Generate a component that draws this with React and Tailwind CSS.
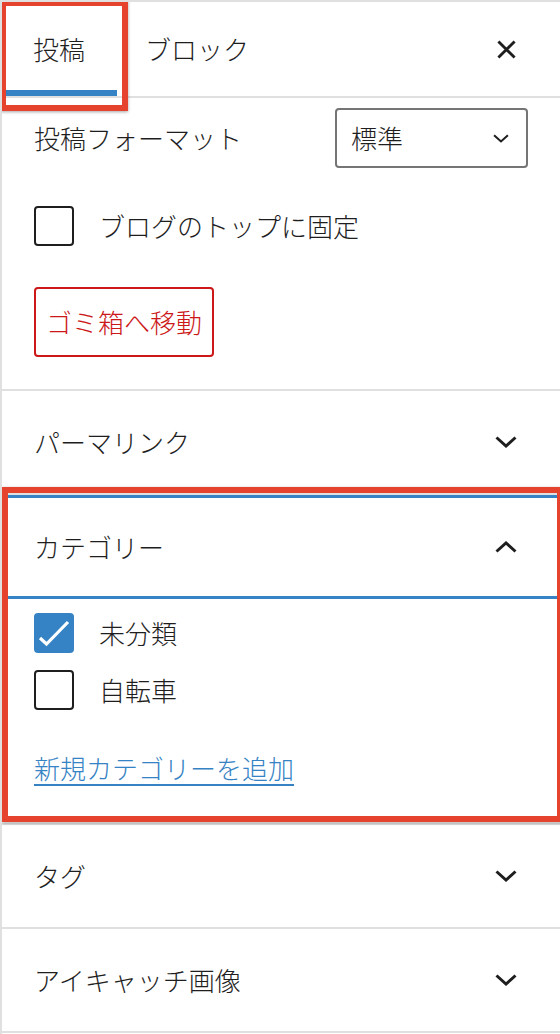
import { useState } from "react";

// サイドバー（投稿設定）のスクショ再現

const Chevron = ({ up = false, small = false }) => (
  <svg
    viewBox="0 0 22 12"
    className={small ? "w-[16px] h-[9px]" : "w-[22px] h-[12px]"}
    fill="none"
    stroke="#1e1e1e"
    strokeWidth={small ? 2.8 : 3}
  >
    {up ? <path d="M1.5 10.5 L11 2 L20.5 10.5" /> : <path d="M1.5 1.5 L11 10 L20.5 1.5" />}
  </svg>
);

const Checkbox = ({ checked }) =>
  checked ? (
    <div className="w-[40px] h-[40px] rounded-[4px] bg-[#3582c4] flex items-center justify-center">
      <svg viewBox="0 0 40 40" className="w-[40px] h-[40px]" fill="none" stroke="#fff" strokeWidth="3.2">
        <path d="M6 25 L12.5 31 L34 9" />
      </svg>
    </div>
  ) : (
    <div className="w-[40px] h-[40px] rounded-[4px] border-2 border-[#1e1e1e]" />
  );

const PanelRow = ({ title }) => (
  <div className="h-[104px] border-b-2 border-[#e0e0e0] flex items-center justify-between pl-[32px] pr-[43px]">
    <span className="text-[26px] leading-[36px]">{title}</span>
    <Chevron />
  </div>
);

const App = () => {
  const [cats] = useState([
    { name: "未分類", checked: true },
    { name: "自転車", checked: false },
  ]);

  return (
    <div className="relative w-[560px] h-[1034px] overflow-hidden bg-white border-l-2 border-t-2 border-[#e0e0e0] text-[#1e1e1e] font-light font-['Noto_Sans_CJK_JP',sans-serif]">
      {/* ヘッダー タブ */}
      <div className="flex h-[96px] border-b-2 border-[#e0e0e0]">
        <div className="flex items-center pl-[31px] pr-[32px] shadow-[inset_0_-6px_0_#3582c4]">
          <span className="text-[26px] leading-[36px]">投稿</span>
        </div>
        <div className="flex items-center px-[28px]">
          <span className="text-[26px] leading-[36px]">ブロック</span>
        </div>
        <div className="ml-auto mr-[12px] w-[84px] flex items-center justify-center">
          <svg viewBox="0 0 20 20" className="w-[19px] h-[19px]" stroke="#1e1e1e" strokeWidth="3">
            <path d="M1.5 1.5 L18.5 18.5 M18.5 1.5 L1.5 18.5" />
          </svg>
        </div>
      </div>

      {/* 投稿設定 */}
      <div className="px-[32px] pt-[10px] pb-[32px] border-b-2 border-[#e0e0e0]">
        <div className="flex items-center justify-between h-[60px]">
          <span className="text-[26px] leading-[36px]">投稿フォーマット</span>
          <div className="w-[193px] h-[60px] border-2 border-[#757575] rounded-[4px] pl-[14px] pr-[17px] flex items-center justify-between">
            <span className="text-[26px] leading-[36px]">標準</span>
            <Chevron small />
          </div>
        </div>
        <div className="mt-[38px] flex items-center gap-[25px]">
          <Checkbox checked={false} />
          <span className="text-[26px] leading-[36px]">ブログのトップに固定</span>
        </div>
        <div className="mt-[41px] flex">
          <div className="h-[70px] px-[10px] border-2 border-[#cc1818] rounded-[4px] text-[#cc1818] flex items-center">
            <span className="text-[26px] leading-[36px]">ゴミ箱へ移動</span>
          </div>
        </div>
      </div>

      <PanelRow title="パーマリンク" />

      {/* カテゴリー */}
      <div className="relative">
        <div className="h-[104px] flex items-center justify-between pl-[32px] pr-[43px] shadow-[inset_0_0_0_3px_#3582c4]">
          <span className="text-[26px] leading-[36px]">カテゴリー</span>
          <Chevron up />
        </div>
        <div className="px-[32px] pt-[14px] pb-[37px] border-b-2 border-[#e0e0e0]">
          <div className="flex flex-col gap-[17px]">
            {cats.map((c, i) => (
              <div key={i} className="flex items-center gap-[25px]">
                <Checkbox checked={c.checked} />
                <span className="text-[26px] leading-[36px]">{c.name}</span>
              </div>
            ))}
          </div>
          <div className="mt-[40px]">
            <span className="text-[26px] leading-[36px] text-[#3582c4] underline underline-offset-[5px] decoration-2">
              新規カテゴリーを追加
            </span>
          </div>
        </div>
        <div className="absolute -top-[8px] left-0 -right-[3px] bottom-[3px] border-[6px] border-[#e5432d] shadow-[0_1px_3px_rgba(0,0,0,0.35)]" />
      </div>

      <PanelRow title="タグ" />
      <PanelRow title="アイキャッチ画像" />

      {/* 投稿タブの注釈枠 */}
      <div className="absolute -top-[2px] -left-[2px] w-[128px] h-[111px] border-[6px] border-[#e5432d] shadow-[0_1px_3px_rgba(0,0,0,0.35)]" />
    </div>
  );
};

export default App;
